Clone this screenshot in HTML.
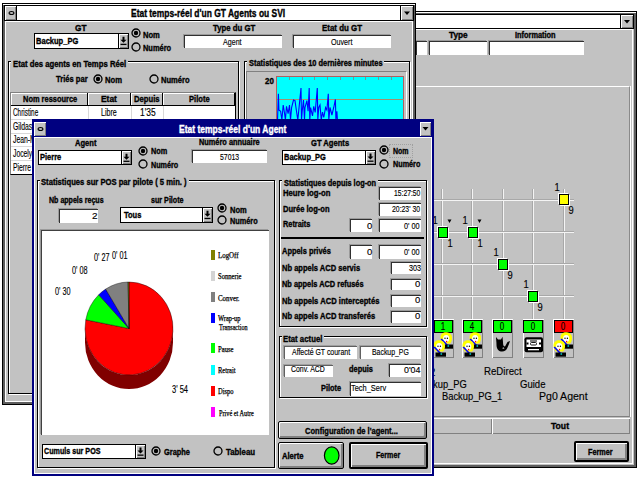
<!DOCTYPE html>
<html><head><meta charset="utf-8"><style>
html,body{margin:0;padding:0;background:#fff;}
body{width:640px;height:480px;position:relative;overflow:hidden;font-family:"Liberation Sans",sans-serif;}
body>div,body>svg{position:absolute;}
.t{white-space:nowrap;}
</style></head><body>
<div style="left:380px;top:11px;width:257px;height:457px;background:#5e5e5e;border:1px solid #000;box-sizing:border-box;box-shadow:inset 0 1px 0 #fff"></div>
<div style="left:383px;top:14px;width:251px;height:451px;background:#c2c2c2"></div>
<div style="left:383px;top:14px;width:251px;height:15px;background:#fff;border:1px solid #000;box-sizing:border-box"></div>
<div style="left:620px;top:14px;width:14px;height:15px;background:#c2c2c2;border:1px solid #000;box-sizing:border-box;box-shadow:inset 1px 1px 0 #fff,inset -1px -1px 0 #808080"></div>
<svg style="left:620px;top:14px" width="14" height="15"><path d="M4,6h6l-3,3.5z" fill="#000"/></svg>
<div style="left:384px;top:29px;width:249px;height:435px;box-shadow:inset 1px 1px 0 #fff,inset -1px -1px 0 #fff"></div>
<div class="t" style="left:448.67px;top:30.5px;font-size:9px;line-height:9px;font-weight:bold;color:#000;font-family:'Liberation Sans',sans-serif;-webkit-text-stroke:0.35px #000;transform:scaleX(0.9176);transform-origin:0 0">Type</div>
<div class="t" style="left:515.405px;top:30.5px;font-size:9px;line-height:9px;font-weight:bold;color:#000;font-family:'Liberation Sans',sans-serif;-webkit-text-stroke:0.35px #000;transform:scaleX(0.8201);transform-origin:0 0">Information</div>
<div style="left:416px;top:41px;width:11px;height:13.5px;background:#fff;border-top:1px solid #303030;border-left:1px solid #303030;box-sizing:border-box;box-shadow:-1px -1px 0 #9a9a9a"></div>
<div style="left:428.5px;top:41px;width:58.5px;height:13.5px;background:#fff;border-top:1px solid #303030;border-left:1px solid #303030;box-sizing:border-box;box-shadow:-1px -1px 0 #9a9a9a"></div>
<div style="left:489px;top:41px;width:95px;height:13.5px;background:#fff;border-top:1px solid #303030;border-left:1px solid #303030;box-sizing:border-box;box-shadow:-1px -1px 0 #9a9a9a"></div>
<div style="left:416px;top:86px;width:214px;height:331px;border-top:1px solid #fff;border-right:1px solid #8a8a8a;border-bottom:1px solid #808080;box-sizing:border-box;box-shadow:1px 0 0 #fff"></div>
<div style="left:441px;top:189px;width:1px;height:131px;background:#a8a8a8"></div>
<div style="left:442px;top:189px;width:1px;height:131px;background:#f4f4f4"></div>
<div style="left:471px;top:189px;width:1px;height:131px;background:#a8a8a8"></div>
<div style="left:472px;top:189px;width:1px;height:131px;background:#f4f4f4"></div>
<div style="left:502px;top:189px;width:1px;height:131px;background:#a8a8a8"></div>
<div style="left:503px;top:189px;width:1px;height:131px;background:#f4f4f4"></div>
<div style="left:532px;top:189px;width:1px;height:131px;background:#a8a8a8"></div>
<div style="left:533px;top:189px;width:1px;height:131px;background:#f4f4f4"></div>
<div style="left:563px;top:189px;width:1px;height:131px;background:#a8a8a8"></div>
<div style="left:564px;top:189px;width:1px;height:131px;background:#f4f4f4"></div>
<div style="left:416px;top:198.5px;width:158px;height:1px;background:#a8a8a8"></div>
<div style="left:416px;top:199.5px;width:158px;height:1px;background:#f4f4f4"></div>
<div style="left:416px;top:231px;width:158px;height:1px;background:#a8a8a8"></div>
<div style="left:416px;top:232px;width:158px;height:1px;background:#f4f4f4"></div>
<div style="left:416px;top:263px;width:158px;height:1px;background:#a8a8a8"></div>
<div style="left:416px;top:264px;width:158px;height:1px;background:#f4f4f4"></div>
<div style="left:416px;top:295px;width:158px;height:1px;background:#a8a8a8"></div>
<div style="left:416px;top:296px;width:158px;height:1px;background:#f4f4f4"></div>
<div style="left:559px;top:194px;width:10px;height:11px;background:#ffff00;border:1px solid #000;box-sizing:border-box;box-shadow:1px 1px 0 #fff,-1px -1px 0 #fff"></div>
<div style="left:437.5px;top:226.5px;width:10px;height:11px;background:#00ff00;border:1px solid #000;box-sizing:border-box;box-shadow:1px 1px 0 #fff,-1px -1px 0 #fff"></div>
<div style="left:467.5px;top:226.5px;width:10px;height:11px;background:#00ff00;border:1px solid #000;box-sizing:border-box;box-shadow:1px 1px 0 #fff,-1px -1px 0 #fff"></div>
<div style="left:498px;top:258.5px;width:10px;height:11px;background:#00ff00;border:1px solid #000;box-sizing:border-box;box-shadow:1px 1px 0 #fff,-1px -1px 0 #fff"></div>
<div style="left:528px;top:290.5px;width:10px;height:11px;background:#00ff00;border:1px solid #000;box-sizing:border-box;box-shadow:1px 1px 0 #fff,-1px -1px 0 #fff"></div>
<div class="t" style="left:256.5px;width:600px;text-align:center;top:182px;font-size:11px;line-height:11px;font-weight:normal;color:#000;font-family:'Liberation Sans',sans-serif;-webkit-text-stroke:0.15px #000;transform:scaleX(0.8500);transform-origin:300px 0">1</div>
<div class="t" style="left:271px;width:600px;text-align:center;top:205px;font-size:11px;line-height:11px;font-weight:normal;color:#000;font-family:'Liberation Sans',sans-serif;-webkit-text-stroke:0.15px #000;transform:scaleX(0.8500);transform-origin:300px 0">9</div>
<div class="t" style="left:135px;width:600px;text-align:center;top:214.5px;font-size:11px;line-height:11px;font-weight:normal;color:#000;font-family:'Liberation Sans',sans-serif;-webkit-text-stroke:0.15px #000;transform:scaleX(0.8500);transform-origin:300px 0">1</div>
<div class="t" style="left:149.5px;width:600px;text-align:center;top:237.5px;font-size:11px;line-height:11px;font-weight:normal;color:#000;font-family:'Liberation Sans',sans-serif;-webkit-text-stroke:0.15px #000;transform:scaleX(0.8500);transform-origin:300px 0">1</div>
<div class="t" style="left:165px;width:600px;text-align:center;top:214.5px;font-size:11px;line-height:11px;font-weight:normal;color:#000;font-family:'Liberation Sans',sans-serif;-webkit-text-stroke:0.15px #000;transform:scaleX(0.8500);transform-origin:300px 0">1</div>
<div class="t" style="left:179.5px;width:600px;text-align:center;top:237.5px;font-size:11px;line-height:11px;font-weight:normal;color:#000;font-family:'Liberation Sans',sans-serif;-webkit-text-stroke:0.15px #000;transform:scaleX(0.8500);transform-origin:300px 0">1</div>
<div class="t" style="left:195.5px;width:600px;text-align:center;top:246.5px;font-size:11px;line-height:11px;font-weight:normal;color:#000;font-family:'Liberation Sans',sans-serif;-webkit-text-stroke:0.15px #000;transform:scaleX(0.8500);transform-origin:300px 0">1</div>
<div class="t" style="left:210px;width:600px;text-align:center;top:269.5px;font-size:11px;line-height:11px;font-weight:normal;color:#000;font-family:'Liberation Sans',sans-serif;-webkit-text-stroke:0.15px #000;transform:scaleX(0.8500);transform-origin:300px 0">9</div>
<div class="t" style="left:225.5px;width:600px;text-align:center;top:278.5px;font-size:11px;line-height:11px;font-weight:normal;color:#000;font-family:'Liberation Sans',sans-serif;-webkit-text-stroke:0.15px #000;transform:scaleX(0.8500);transform-origin:300px 0">1</div>
<div class="t" style="left:240px;width:600px;text-align:center;top:301.5px;font-size:11px;line-height:11px;font-weight:normal;color:#000;font-family:'Liberation Sans',sans-serif;-webkit-text-stroke:0.15px #000;transform:scaleX(0.8500);transform-origin:300px 0">9</div>
<svg style="left:446.5px;top:219px" width="6" height="5"><path d="M0.5,0.5h4l-2,3.5z" fill="#000"/></svg>
<svg style="left:476.5px;top:219px" width="6" height="5"><path d="M0.5,0.5h4l-2,3.5z" fill="#000"/></svg>
<div style="left:433px;top:319px;width:21px;height:39px;background:#c2c2c2;box-shadow:inset 1px 1px 0 #fff,inset -1px -1px 0 #808080"></div>
<div style="left:433.5px;top:320px;width:19.5px;height:12.5px;background:#00ff00;border:1px solid #000;box-sizing:border-box"></div>
<div class="t" style="left:143.25px;width:600px;text-align:center;top:321.5px;font-size:10px;line-height:10px;font-weight:normal;color:#000;font-family:'Liberation Sans',sans-serif;-webkit-text-stroke:0.15px #000;transform:scaleX(0.8000);transform-origin:300px 0">1</div>
<svg style="left:439px;top:331.5px" width="16" height="17" viewBox="0 0 16 17"><path d="M1.8,7.5 C0.5,2 4,0 7.5,0.3 C11.5,0.6 13.5,3.5 13,7 C12.7,9 12,10.5 11,11.5 L4,11.5 C2.8,10.5 2,9 1.8,7.5z" fill="#ffff00"/><ellipse cx="7.2" cy="6.6" rx="3.1" ry="3.6" fill="#fff"/><circle cx="6" cy="6.3" r="0.7" fill="#000"/><circle cx="8.4" cy="6.3" r="0.7" fill="#000"/><circle cx="7.6" cy="9.6" r="0.8" fill="#ff0000"/><path d="M2.2,7 L8.5,13.5" stroke="#0000ff" stroke-width="1.6"/><rect x="3.5" y="12.5" width="10.5" height="4.2" fill="#000"/><rect x="8.5" y="13.2" width="1.6" height="1.6" fill="#00c0c0"/></svg>
<svg style="left:431.5px;top:340.3px" width="16" height="17" viewBox="0 0 16 17"><path d="M1.8,7.5 C0.5,2 4,0 7.5,0.3 C11.5,0.6 13.5,3.5 13,7 C12.7,9 12,10.5 11,11.5 L4,11.5 C2.8,10.5 2,9 1.8,7.5z" fill="#ffff00"/><ellipse cx="7.2" cy="6.6" rx="3.1" ry="3.6" fill="#fff"/><circle cx="6" cy="6.3" r="0.7" fill="#000"/><circle cx="8.4" cy="6.3" r="0.7" fill="#000"/><circle cx="7.6" cy="9.6" r="0.8" fill="#ff0000"/><path d="M2.2,7 L8.5,13.5" stroke="#0000ff" stroke-width="1.6"/><rect x="3.5" y="12.5" width="10.5" height="4.2" fill="#000"/><rect x="8.5" y="13.2" width="1.6" height="1.6" fill="#00c0c0"/></svg>
<div style="left:462px;top:319px;width:21px;height:39px;background:#c2c2c2;box-shadow:inset 1px 1px 0 #fff,inset -1px -1px 0 #808080"></div>
<div style="left:462.5px;top:320px;width:19.5px;height:12.5px;background:#00ff00;border:1px solid #000;box-sizing:border-box"></div>
<div class="t" style="left:172.25px;width:600px;text-align:center;top:321.5px;font-size:10px;line-height:10px;font-weight:normal;color:#000;font-family:'Liberation Sans',sans-serif;-webkit-text-stroke:0.15px #000;transform:scaleX(0.8000);transform-origin:300px 0">4</div>
<svg style="left:468px;top:331.5px" width="16" height="17" viewBox="0 0 16 17"><path d="M1.8,7.5 C0.5,2 4,0 7.5,0.3 C11.5,0.6 13.5,3.5 13,7 C12.7,9 12,10.5 11,11.5 L4,11.5 C2.8,10.5 2,9 1.8,7.5z" fill="#ffff00"/><ellipse cx="7.2" cy="6.6" rx="3.1" ry="3.6" fill="#fff"/><circle cx="6" cy="6.3" r="0.7" fill="#000"/><circle cx="8.4" cy="6.3" r="0.7" fill="#000"/><circle cx="7.6" cy="9.6" r="0.8" fill="#ff0000"/><path d="M2.2,7 L8.5,13.5" stroke="#0000ff" stroke-width="1.6"/><rect x="3.5" y="12.5" width="10.5" height="4.2" fill="#000"/><rect x="8.5" y="13.2" width="1.6" height="1.6" fill="#00c0c0"/></svg>
<svg style="left:460.5px;top:340.3px" width="16" height="17" viewBox="0 0 16 17"><path d="M1.8,7.5 C0.5,2 4,0 7.5,0.3 C11.5,0.6 13.5,3.5 13,7 C12.7,9 12,10.5 11,11.5 L4,11.5 C2.8,10.5 2,9 1.8,7.5z" fill="#ffff00"/><ellipse cx="7.2" cy="6.6" rx="3.1" ry="3.6" fill="#fff"/><circle cx="6" cy="6.3" r="0.7" fill="#000"/><circle cx="8.4" cy="6.3" r="0.7" fill="#000"/><circle cx="7.6" cy="9.6" r="0.8" fill="#ff0000"/><path d="M2.2,7 L8.5,13.5" stroke="#0000ff" stroke-width="1.6"/><rect x="3.5" y="12.5" width="10.5" height="4.2" fill="#000"/><rect x="8.5" y="13.2" width="1.6" height="1.6" fill="#00c0c0"/></svg>
<div style="left:492px;top:319px;width:21px;height:39px;background:#c2c2c2;box-shadow:inset 1px 1px 0 #fff,inset -1px -1px 0 #808080"></div>
<div style="left:492.5px;top:320px;width:19.5px;height:12.5px;background:#00ff00;border:1px solid #000;box-sizing:border-box"></div>
<div class="t" style="left:202.25px;width:600px;text-align:center;top:321.5px;font-size:10px;line-height:10px;font-weight:normal;color:#000;font-family:'Liberation Sans',sans-serif;-webkit-text-stroke:0.15px #000;transform:scaleX(0.8000);transform-origin:300px 0">0</div>
<svg style="left:495px;top:336px" width="16" height="17" viewBox="0 0 16 17"><path d="M1,1 L3,3.5 L6,3.5 L7.5,0.8 L8,6 C8,9 8.5,10.5 10,10.5 L12.5,6 L15,5 L14,8 L12.5,11.5 C11.5,14.5 9,16 6,15.5 C3,15 1.5,12 1.5,9 C1.5,6 1,3 1,1z" fill="#000"/><path d="M8,11 L9.5,12.5 L7.5,13z" fill="#c4c4c4"/></svg>
<div style="left:522.5px;top:319px;width:21px;height:39px;background:#c2c2c2;box-shadow:inset 1px 1px 0 #fff,inset -1px -1px 0 #808080"></div>
<div style="left:523px;top:320px;width:19.5px;height:12.5px;background:#00ff00;border:1px solid #000;box-sizing:border-box"></div>
<div class="t" style="left:232.75px;width:600px;text-align:center;top:321.5px;font-size:10px;line-height:10px;font-weight:normal;color:#000;font-family:'Liberation Sans',sans-serif;-webkit-text-stroke:0.15px #000;transform:scaleX(0.8000);transform-origin:300px 0">0</div>
<svg style="left:523.5px;top:336.5px" width="19" height="16" viewBox="0 0 19 16"><rect x="0.5" y="0.3" width="18.5" height="15" rx="2" fill="#000"/><rect x="2.5" y="2.5" width="14.5" height="7.5" fill="#fff"/><rect x="6" y="3.5" width="7" height="1" fill="#000"/><rect x="6.5" y="5.5" width="6" height="2.5" rx="1" fill="none" stroke="#000" stroke-width="0.9"/><rect x="2.5" y="5.5" width="2" height="2" fill="#000"/><rect x="15" y="5.5" width="2" height="2" fill="#000"/><rect x="4" y="12" width="11" height="1.3" fill="#fff"/></svg>
<div style="left:553px;top:319px;width:21px;height:39px;background:#c2c2c2;box-shadow:inset 1px 1px 0 #fff,inset -1px -1px 0 #808080"></div>
<div style="left:553.5px;top:320px;width:19.5px;height:12.5px;background:#ff0000;border:1px solid #000;box-sizing:border-box"></div>
<div class="t" style="left:263.25px;width:600px;text-align:center;top:321.5px;font-size:10px;line-height:10px;font-weight:normal;color:#000;font-family:'Liberation Sans',sans-serif;-webkit-text-stroke:0.15px #000;transform:scaleX(0.8000);transform-origin:300px 0">0</div>
<svg style="left:559px;top:331.5px" width="16" height="17" viewBox="0 0 16 17"><path d="M1.8,7.5 C0.5,2 4,0 7.5,0.3 C11.5,0.6 13.5,3.5 13,7 C12.7,9 12,10.5 11,11.5 L4,11.5 C2.8,10.5 2,9 1.8,7.5z" fill="#ffff00"/><ellipse cx="7.2" cy="6.6" rx="3.1" ry="3.6" fill="#fff"/><circle cx="6" cy="6.3" r="0.7" fill="#000"/><circle cx="8.4" cy="6.3" r="0.7" fill="#000"/><circle cx="7.6" cy="9.6" r="0.8" fill="#ff0000"/><path d="M2.2,7 L8.5,13.5" stroke="#0000ff" stroke-width="1.6"/><rect x="3.5" y="12.5" width="10.5" height="4.2" fill="#000"/><rect x="8.5" y="13.2" width="1.6" height="1.6" fill="#00c0c0"/></svg>
<svg style="left:551.5px;top:340.3px" width="16" height="17" viewBox="0 0 16 17"><path d="M1.8,7.5 C0.5,2 4,0 7.5,0.3 C11.5,0.6 13.5,3.5 13,7 C12.7,9 12,10.5 11,11.5 L4,11.5 C2.8,10.5 2,9 1.8,7.5z" fill="#ffff00"/><ellipse cx="7.2" cy="6.6" rx="3.1" ry="3.6" fill="#fff"/><circle cx="6" cy="6.3" r="0.7" fill="#000"/><circle cx="8.4" cy="6.3" r="0.7" fill="#000"/><circle cx="7.6" cy="9.6" r="0.8" fill="#ff0000"/><path d="M2.2,7 L8.5,13.5" stroke="#0000ff" stroke-width="1.6"/><rect x="3.5" y="12.5" width="10.5" height="4.2" fill="#000"/><rect x="8.5" y="13.2" width="1.6" height="1.6" fill="#00c0c0"/></svg>
<div class="t" style="left:484.214px;top:366.3px;font-size:10.5px;line-height:10.5px;font-weight:normal;color:#000;font-family:'Liberation Sans',sans-serif;-webkit-text-stroke:0.15px #000;transform:scaleX(0.9200);transform-origin:0 0">ReDirect</div>
<div class="t" style="left:429.622px;top:366.8px;font-size:10.5px;line-height:10.5px;font-weight:normal;color:#000;font-family:'Liberation Sans',sans-serif;-webkit-text-stroke:0.15px #000;transform:scaleX(0.9000);transform-origin:0 0">2</div>
<div class="t" style="left:417.127px;top:378.5px;font-size:10.5px;line-height:10.5px;font-weight:normal;color:#000;font-family:'Liberation Sans',sans-serif;-webkit-text-stroke:0.15px #000;transform:scaleX(0.8878);transform-origin:0 0">Backup_PG</div>
<div class="t" style="left:520.318px;top:378.5px;font-size:10.5px;line-height:10.5px;font-weight:normal;color:#000;font-family:'Liberation Sans',sans-serif;-webkit-text-stroke:0.15px #000;transform:scaleX(0.9089);transform-origin:0 0">Guide</div>
<div class="t" style="left:441.926px;top:391.3px;font-size:10.5px;line-height:10.5px;font-weight:normal;color:#000;font-family:'Liberation Sans',sans-serif;-webkit-text-stroke:0.15px #000;transform:scaleX(0.8898);transform-origin:0 0">Backup_PG_1</div>
<div class="t" style="left:539.178px;top:391.3px;font-size:10.5px;line-height:10.5px;font-weight:normal;color:#000;font-family:'Liberation Sans',sans-serif;-webkit-text-stroke:0.15px #000;transform:scaleX(1.0038);transform-origin:0 0">Pg0 Agent</div>
<div style="left:416px;top:417.5px;width:76px;height:16px;background:#c2c2c2;box-sizing:border-box;box-shadow:inset 1px 1px 0 #fff, inset -1px -1px 0 #808080;"></div>
<div style="left:492px;top:417.5px;width:137.5px;height:16px;background:#c2c2c2;box-sizing:border-box;box-shadow:inset 1px 1px 0 #fff, inset -1px -1px 0 #808080;"></div>
<div class="t" style="left:550.656px;top:421.7px;font-size:9px;line-height:9px;font-weight:bold;color:#000;font-family:'Liberation Sans',sans-serif;-webkit-text-stroke:0.35px #000;transform:scaleX(0.9558);transform-origin:0 0">Tout</div>
<div style="left:573.5px;top:441px;width:55px;height:20.5px;background:#c2c2c2;border:1px solid #000;box-sizing:border-box;border-radius:2px;box-shadow:inset 1px 1px 0 #fff, inset -1px -1px 0 #808080, inset -2px -2px 0 #808080;border-width:2px"></div>
<div class="t" style="left:588.31px;top:448px;font-size:9px;line-height:9px;font-weight:bold;color:#000;font-family:'Liberation Sans',sans-serif;-webkit-text-stroke:0.35px #000;transform:scaleX(0.8055);transform-origin:0 0">Fermer</div>
<div style="left:2px;top:3px;width:414px;height:402px;background:#5e5e5e;border:1px solid #000;box-sizing:border-box;box-shadow:inset 0 1px 0 #fff"></div>
<div style="left:5px;top:6px;width:408px;height:396px;background:#c2c2c2"></div>
<div style="left:4px;top:5px;width:410px;height:16px;background:#fff;border:1px solid #000;box-sizing:border-box"></div>
<div style="left:4px;top:5px;width:13px;height:16px;background:#c2c2c2;border:1px solid #000;box-sizing:border-box;box-shadow:inset 1px 1px 0 #fff,inset -1px -1px 0 #808080"></div>
<svg style="left:7.5px;top:10px" width="7" height="6"><ellipse cx="3.5" cy="3" rx="2.4" ry="1.5" fill="#bbb" stroke="#000" stroke-width="1.1"/></svg>
<div style="left:400px;top:5px;width:14px;height:16px;background:#c2c2c2;border:1px solid #000;box-sizing:border-box;box-shadow:inset 1px 1px 0 #fff,inset -1px -1px 0 #808080"></div>
<svg style="left:400px;top:5px" width="14" height="16"><path d="M4,6.5h6l-3,3.5z" fill="#000"/></svg>
<div class="t" style="left:131.162px;top:9.4px;font-size:10px;line-height:10px;font-weight:bold;color:#000;font-family:'Liberation Sans',sans-serif;-webkit-text-stroke:0.35px #000;transform:scaleX(0.8445);transform-origin:0 0">Etat temps-réel d'un GT Agents ou SVI</div>
<div style="left:5px;top:21px;width:408px;height:381px;box-shadow:inset 1px 1px 0 #fff, inset -1px -1px 0 #fff"></div>
<div class="t" style="left:75.1714px;top:23.5px;font-size:9px;line-height:9px;font-weight:bold;color:#000;font-family:'Liberation Sans',sans-serif;-webkit-text-stroke:0.35px #000;transform:scaleX(0.9128);transform-origin:0 0">GT</div>
<div style="left:34px;top:33px;width:95px;height:15.5px;background:#fff;border:1px solid #000;box-sizing:border-box"></div>
<div style="left:118px;top:34px;width:10px;height:13.5px;background:#c2c2c2;border-left:1px solid #000;box-sizing:border-box;box-shadow:inset 1px 1px 0 #fff, inset -1px -1px 0 #808080"></div>
<svg style="left:118px;top:33px;" width="11" height="15.5" viewBox="0 0 11 15.5"><path d="M4.5,3.75h2v3h2l-3,3l-3,-3h2z" fill="#000"/><rect x="2.5" y="10.75" width="6" height="1.3" fill="#000"/></svg>
<div class="t" style="left:36.2985px;top:36.5px;font-size:9px;line-height:9px;font-weight:bold;color:#000;font-family:'Liberation Sans',sans-serif;-webkit-text-stroke:0.35px #000;transform:scaleX(0.8374);transform-origin:0 0">Backup_PG</div>
<svg style="left:131.3px;top:28px;" width="10.0" height="10.0"><circle cx="5.0" cy="5.0" r="4.0" fill="none" stroke="#000" stroke-width="1.3"/><circle cx="5.0" cy="5.0" r="2.2" fill="#000"/></svg>
<div class="t" style="left:143.447px;top:30.5px;font-size:9px;line-height:9px;font-weight:bold;color:#000;font-family:'Liberation Sans',sans-serif;-webkit-text-stroke:0.35px #000;transform:scaleX(0.8429);transform-origin:0 0">Nom</div>
<svg style="left:131.3px;top:42px;" width="10.0" height="10.0"><circle cx="5.0" cy="5.0" r="4.0" fill="none" stroke="#000" stroke-width="1.3"/></svg>
<div class="t" style="left:143.453px;top:44.25px;font-size:9px;line-height:9px;font-weight:bold;color:#000;font-family:'Liberation Sans',sans-serif;-webkit-text-stroke:0.35px #000;transform:scaleX(0.8262);transform-origin:0 0">Numéro</div>
<div class="t" style="left:212.988px;top:23.5px;font-size:9px;line-height:9px;font-weight:bold;color:#000;font-family:'Liberation Sans',sans-serif;-webkit-text-stroke:0.35px #000;transform:scaleX(0.8668);transform-origin:0 0">Type du GT</div>
<div style="left:184px;top:34.7px;width:98px;height:13.6px;background:#fff;border-top:1px solid #303030;border-left:1px solid #303030;box-sizing:border-box;box-shadow:-1px -1px 0 #9a9a9a"></div>
<div class="t" style="left:222.716px;top:37.4px;font-size:9.5px;line-height:9.5px;font-weight:normal;color:#000;font-family:'Liberation Sans',sans-serif;-webkit-text-stroke:0.15px #000;transform:scaleX(0.7480);transform-origin:0 0">Agent</div>
<div class="t" style="left:322.283px;top:23.5px;font-size:9px;line-height:9px;font-weight:bold;color:#000;font-family:'Liberation Sans',sans-serif;-webkit-text-stroke:0.35px #000;transform:scaleX(0.8800);transform-origin:0 0">Etat du GT</div>
<div style="left:292.7px;top:34.7px;width:98.3px;height:13.6px;background:#fff;border-top:1px solid #303030;border-left:1px solid #303030;box-sizing:border-box;box-shadow:-1px -1px 0 #9a9a9a"></div>
<div class="t" style="left:330.715px;top:37.4px;font-size:9.5px;line-height:9.5px;font-weight:normal;color:#000;font-family:'Liberation Sans',sans-serif;-webkit-text-stroke:0.15px #000;transform:scaleX(0.7496);transform-origin:0 0">Ouvert</div>
<div style="left:7.5px;top:61px;width:231.5px;height:333px;border:1px solid #000;box-shadow:1px 1px 0 #fff, inset 1px 1px 0 #fff;box-sizing:border-box"></div>
<div style="left:11.4px;top:59px;width:116.6px;height:5px;background:#c2c2c2"></div>
<div class="t" style="left:13.0909px;top:59.8px;font-size:9px;line-height:9px;font-weight:bold;color:#000;font-family:'Liberation Sans',sans-serif;-webkit-text-stroke:0.35px #000;transform:scaleX(0.8586);transform-origin:0 0">Etat des agents en Temps Réel</div>
<div class="t" style="left:55.5967px;top:75.4px;font-size:9px;line-height:9px;font-weight:bold;color:#000;font-family:'Liberation Sans',sans-serif;-webkit-text-stroke:0.35px #000;transform:scaleX(0.8424);transform-origin:0 0">Triés par</div>
<svg style="left:93px;top:74.4px;" width="10.0" height="10.0"><circle cx="5.0" cy="5.0" r="4.0" fill="none" stroke="#000" stroke-width="1.3"/><circle cx="5.0" cy="5.0" r="2.2" fill="#000"/></svg>
<div class="t" style="left:104.694px;top:75.6px;font-size:9px;line-height:9px;font-weight:bold;color:#000;font-family:'Liberation Sans',sans-serif;-webkit-text-stroke:0.35px #000;transform:scaleX(0.8506);transform-origin:0 0">Nom</div>
<svg style="left:148.5px;top:74.4px;" width="10.0" height="10.0"><circle cx="5.0" cy="5.0" r="4.0" fill="none" stroke="#000" stroke-width="1.3"/></svg>
<div class="t" style="left:160.897px;top:75.8px;font-size:9px;line-height:9px;font-weight:bold;color:#000;font-family:'Liberation Sans',sans-serif;-webkit-text-stroke:0.35px #000;transform:scaleX(0.8412);transform-origin:0 0">Numéro</div>
<div style="left:10px;top:92px;width:226px;height:83px;background:#fff;border:1px solid #000;border-top-color:#808080;border-left-color:#808080;box-sizing:border-box"></div>
<div style="left:11px;top:93px;width:77px;height:12.5px;background:#c2c2c2;border-right:1px solid #000;border-bottom:1px solid #000;box-sizing:border-box;box-shadow:inset 1px 1px 0 #fff"></div>
<div class="t" style="left:22.7022px;top:95.2px;font-size:9px;line-height:9px;font-weight:bold;color:#000;font-family:'Liberation Sans',sans-serif;-webkit-text-stroke:0.35px #000;transform:scaleX(0.8271);transform-origin:0 0">Nom ressource</div>
<div style="left:88px;top:93px;width:43px;height:12.5px;background:#c2c2c2;border-right:1px solid #000;border-bottom:1px solid #000;box-sizing:border-box;box-shadow:inset 1px 1px 0 #fff"></div>
<div class="t" style="left:101.413px;top:95.2px;font-size:9px;line-height:9px;font-weight:bold;color:#000;font-family:'Liberation Sans',sans-serif;-webkit-text-stroke:0.35px #000;transform:scaleX(0.9366);transform-origin:0 0">Etat</div>
<div style="left:131px;top:93px;width:32px;height:12.5px;background:#c2c2c2;border-right:1px solid #000;border-bottom:1px solid #000;box-sizing:border-box;box-shadow:inset 1px 1px 0 #fff"></div>
<div class="t" style="left:134.394px;top:95.2px;font-size:9px;line-height:9px;font-weight:bold;color:#000;font-family:'Liberation Sans',sans-serif;-webkit-text-stroke:0.35px #000;transform:scaleX(0.8503);transform-origin:0 0">Depuis</div>
<div style="left:163px;top:93px;width:72px;height:12.5px;background:#c2c2c2;border-right:1px solid #000;border-bottom:1px solid #000;box-sizing:border-box;box-shadow:inset 1px 1px 0 #fff"></div>
<div class="t" style="left:189.397px;top:95.2px;font-size:9px;line-height:9px;font-weight:bold;color:#000;font-family:'Liberation Sans',sans-serif;-webkit-text-stroke:0.35px #000;transform:scaleX(0.8410);transform-origin:0 0">Pilote</div>
<div style="left:11px;top:119.2px;width:224px;height:1px;background:#d8d8d8"></div>
<div style="left:11px;top:132.7px;width:224px;height:1px;background:#d8d8d8"></div>
<div style="left:11px;top:146.2px;width:224px;height:1px;background:#d8d8d8"></div>
<div style="left:11px;top:160px;width:224px;height:1px;background:#d8d8d8"></div>
<div style="left:87.5px;top:105.5px;width:1px;height:69px;background:#d8d8d8"></div>
<div style="left:130.5px;top:105.5px;width:1px;height:69px;background:#d8d8d8"></div>
<div style="left:162.5px;top:105.5px;width:1px;height:69px;background:#d8d8d8"></div>
<div class="t" style="left:12.7444px;top:108.2px;font-size:10px;line-height:10px;font-weight:normal;color:#000;font-family:'Liberation Sans',sans-serif;-webkit-text-stroke:0.15px #000;transform:scaleX(0.6390);transform-origin:0 0">Christine</div>
<div class="t" style="left:12.728px;top:121.8px;font-size:10px;line-height:10px;font-weight:normal;color:#000;font-family:'Liberation Sans',sans-serif;-webkit-text-stroke:0.15px #000;transform:scaleX(0.6800);transform-origin:0 0">Gildas</div>
<div class="t" style="left:12.728px;top:135.4px;font-size:10px;line-height:10px;font-weight:normal;color:#000;font-family:'Liberation Sans',sans-serif;-webkit-text-stroke:0.15px #000;transform:scaleX(0.6800);transform-origin:0 0">Jean-Marc</div>
<div class="t" style="left:12.728px;top:149px;font-size:10px;line-height:10px;font-weight:normal;color:#000;font-family:'Liberation Sans',sans-serif;-webkit-text-stroke:0.15px #000;transform:scaleX(0.6800);transform-origin:0 0">Jocelyne</div>
<div class="t" style="left:12.728px;top:162.6px;font-size:10px;line-height:10px;font-weight:normal;color:#000;font-family:'Liberation Sans',sans-serif;-webkit-text-stroke:0.15px #000;transform:scaleX(0.6800);transform-origin:0 0">Pierre</div>
<div class="t" style="left:101.465px;top:107.7px;font-size:10px;line-height:10px;font-weight:normal;color:#000;font-family:'Liberation Sans',sans-serif;-webkit-text-stroke:0.15px #000;transform:scaleX(0.7115);transform-origin:0 0">Libre</div>
<div class="t" style="left:139.663px;top:107.7px;font-size:10px;line-height:10px;font-weight:normal;color:#000;font-family:'Liberation Sans',sans-serif;-webkit-text-stroke:0.15px #000;transform:scaleX(0.8431);transform-origin:0 0">1'35</div>
<div style="left:244px;top:61px;width:166px;height:333px;border:1px solid #000;box-shadow:1px 1px 0 #fff, inset 1px 1px 0 #fff;box-sizing:border-box"></div>
<div style="left:247.1px;top:59px;width:137px;height:5px;background:#c2c2c2"></div>
<div class="t" style="left:248.802px;top:59.3px;font-size:9px;line-height:9px;font-weight:bold;color:#000;font-family:'Liberation Sans',sans-serif;-webkit-text-stroke:0.35px #000;transform:scaleX(0.8270);transform-origin:0 0">Statistiques des 10 dernières minutes</div>
<div style="left:246px;top:71px;width:161px;height:321px;background:#c2c2c2;box-sizing:border-box;border-top:1px solid #808080;border-left:1px solid #808080;border-bottom:1px solid #fff;border-right:1px solid #fff;"></div>
<div class="t" style="left:265.482px;top:77.3px;font-size:9px;line-height:9px;font-weight:bold;color:#000;font-family:'Liberation Sans',sans-serif;-webkit-text-stroke:0.35px #000;transform:scaleX(0.8827);transform-origin:0 0">20</div>
<div style="left:275.5px;top:75.7px;width:128.5px;height:64.3px;background:#00ffff;border:1px solid #b06060;border-bottom:none;box-sizing:border-box"></div>
<div style="left:276.5px;top:99px;width:127px;height:1px;background:#a09070"></div>
<div style="left:289px;top:76.5px;width:1px;height:3px;background:#60a0a0"></div>
<div style="left:301.7px;top:76.5px;width:1px;height:3px;background:#60a0a0"></div>
<div style="left:314.4px;top:76.5px;width:1px;height:3px;background:#60a0a0"></div>
<div style="left:327.1px;top:76.5px;width:1px;height:3px;background:#60a0a0"></div>
<div style="left:339.8px;top:76.5px;width:1px;height:3px;background:#60a0a0"></div>
<div style="left:352.5px;top:76.5px;width:1px;height:3px;background:#60a0a0"></div>
<div style="left:365.2px;top:76.5px;width:1px;height:3px;background:#60a0a0"></div>
<div style="left:377.9px;top:76.5px;width:1px;height:3px;background:#60a0a0"></div>
<div style="left:390.6px;top:76.5px;width:1px;height:3px;background:#60a0a0"></div>
<svg style="left:276px;top:76px" width="128" height="50"><polyline points="1.50,45.00 2.40,17.75 2.90,34.00 4.60,35.25 5.90,44.00 7.20,29.00 8.50,37.00 9.40,44.00 10.50,30.25 12.10,37.75 13.50,29.00 14.50,44.00 15.60,31.50 17.50,24.00 19.00,24.60 20.50,35.25 21.80,44.00 25.00,12.00 25.50,44.00 26.20,35.00 27.50,24.00 28.50,44.00 29.00,31.50 30.90,24.60 32.10,35.25 33.20,12.00 33.80,44.00 34.60,31.50 36.50,40.00 37.75,30.25 39.20,36.50 41.30,12.00 41.80,44.00 42.75,31.50 44.00,29.00 45.25,44.00 46.50,36.00 47.75,41.50 49.60,31.50 50.90,34.00 52.30,17.75 52.80,44.00 54.00,31.50 55.90,39.00 57.75,31.50 59.40,23.40 59.90,44.00 60.90,35.25 61.50,45.00" fill="none" stroke="#0000ff" stroke-width="1.1"/></svg>
<div style="left:32px;top:119px;width:402px;height:357px;background:#c2c2c2;border:2px solid #000080;box-sizing:border-box"></div>
<div style="left:34px;top:121px;width:398px;height:15.5px;background:#000080"></div>
<div style="left:34px;top:122px;width:12px;height:14px;background:#c2c2c2;box-shadow:inset 1px 1px 0 #fff,inset -1px -1px 0 #808080"></div>
<svg style="left:37px;top:126px" width="7" height="6"><ellipse cx="3.5" cy="3" rx="2.4" ry="1.5" fill="#bbb" stroke="#000" stroke-width="1.1"/></svg>
<div style="left:420px;top:122px;width:11px;height:14px;background:#c2c2c2;box-shadow:inset 1px 1px 0 #fff,inset -1px -1px 0 #808080"></div>
<svg style="left:420px;top:121px" width="11" height="15"><path d="M2.5,6h6l-3,3.5z" fill="#000"/></svg>
<div class="t" style="left:178.96px;top:125.2px;font-size:10px;line-height:10px;font-weight:bold;color:#fff;font-family:'Liberation Sans',sans-serif;-webkit-text-stroke:0.35px #fff;transform:scaleX(0.8491);transform-origin:0 0">Etat temps-réel d'un Agent</div>
<div style="left:34px;top:136.5px;width:397.5px;height:337.5px;box-shadow:inset 1px 1px 0 #fff, inset -1px -1px 0 #fff"></div>
<div class="t" style="left:74.6978px;top:138.7px;font-size:9px;line-height:9px;font-weight:bold;color:#000;font-family:'Liberation Sans',sans-serif;-webkit-text-stroke:0.35px #000;transform:scaleX(0.8395);transform-origin:0 0">Agent</div>
<div style="left:38.3px;top:149.7px;width:93.3px;height:15.3px;background:#fff;border:1px solid #000;box-sizing:border-box"></div>
<div style="left:120.6px;top:150.7px;width:10px;height:13.3px;background:#c2c2c2;border-left:1px solid #000;box-sizing:border-box;box-shadow:inset 1px 1px 0 #fff, inset -1px -1px 0 #808080"></div>
<svg style="left:120.6px;top:149.7px;" width="11" height="15.300000000000011" viewBox="0 0 11 15.300000000000011"><path d="M4.5,3.6500000000000057h2v3h2l-3,3l-3,-3h2z" fill="#000"/><rect x="2.5" y="10.650000000000006" width="6" height="1.3" fill="#000"/></svg>
<div class="t" style="left:40.401px;top:153.2px;font-size:9px;line-height:9px;font-weight:bold;color:#000;font-family:'Liberation Sans',sans-serif;-webkit-text-stroke:0.35px #000;transform:scaleX(0.8307);transform-origin:0 0">Pierre</div>
<svg style="left:137.6px;top:145.9px;" width="10.0" height="10.0"><circle cx="5.0" cy="5.0" r="4.0" fill="none" stroke="#000" stroke-width="1.3"/><circle cx="5.0" cy="5.0" r="2.2" fill="#000"/></svg>
<div class="t" style="left:150.607px;top:147.3px;font-size:9px;line-height:9px;font-weight:bold;color:#000;font-family:'Liberation Sans',sans-serif;-webkit-text-stroke:0.35px #000;transform:scaleX(0.8143);transform-origin:0 0">Nom</div>
<svg style="left:137.6px;top:159.2px;" width="10.0" height="10.0"><circle cx="5.0" cy="5.0" r="4.0" fill="none" stroke="#000" stroke-width="1.3"/></svg>
<div class="t" style="left:150.611px;top:160.5px;font-size:9px;line-height:9px;font-weight:bold;color:#000;font-family:'Liberation Sans',sans-serif;-webkit-text-stroke:0.35px #000;transform:scaleX(0.8022);transform-origin:0 0">Numéro</div>
<div class="t" style="left:199.205px;top:138.3px;font-size:9px;line-height:9px;font-weight:bold;color:#000;font-family:'Liberation Sans',sans-serif;-webkit-text-stroke:0.35px #000;transform:scaleX(0.8186);transform-origin:0 0">Numéro annuaire</div>
<div style="left:191.8px;top:149.6px;width:75.5px;height:13.1px;background:#fff;border-top:1px solid #303030;border-left:1px solid #303030;box-sizing:border-box;box-shadow:-1px -1px 0 #9a9a9a"></div>
<div class="t" style="left:219.924px;top:151.6px;font-size:9.5px;line-height:9.5px;font-weight:normal;color:#000;font-family:'Liberation Sans',sans-serif;-webkit-text-stroke:0.15px #000;transform:scaleX(0.7250);transform-origin:0 0">57013</div>
<div class="t" style="left:310.696px;top:138.5px;font-size:9px;line-height:9px;font-weight:bold;color:#000;font-family:'Liberation Sans',sans-serif;-webkit-text-stroke:0.35px #000;transform:scaleX(0.8437);transform-origin:0 0">GT Agents</div>
<div style="left:281.5px;top:149.7px;width:94.5px;height:15.1px;background:#fff;border:1px solid #000;box-sizing:border-box"></div>
<div style="left:365px;top:150.7px;width:10px;height:13.1px;background:#c2c2c2;border-left:1px solid #000;box-sizing:border-box;box-shadow:inset 1px 1px 0 #fff, inset -1px -1px 0 #808080"></div>
<svg style="left:365px;top:149.7px;" width="11" height="15.100000000000023" viewBox="0 0 11 15.100000000000023"><path d="M4.5,3.5500000000000114h2v3h2l-3,3l-3,-3h2z" fill="#000"/><rect x="2.5" y="10.550000000000011" width="6" height="1.3" fill="#000"/></svg>
<div class="t" style="left:284.452px;top:152.8px;font-size:9px;line-height:9px;font-weight:bold;color:#000;font-family:'Liberation Sans',sans-serif;-webkit-text-stroke:0.35px #000;transform:scaleX(0.8284);transform-origin:0 0">Backup_PG</div>
<svg style="left:379px;top:145px;" width="10.0" height="10.0"><circle cx="5.0" cy="5.0" r="4.0" fill="none" stroke="#000" stroke-width="1.3"/><circle cx="5.0" cy="5.0" r="2.2" fill="#000"/></svg>
<div class="t" style="left:392.72px;top:147px;font-size:9px;line-height:9px;font-weight:bold;color:#000;font-family:'Liberation Sans',sans-serif;-webkit-text-stroke:0.35px #000;transform:scaleX(0.7780);transform-origin:0 0">Nom</div>
<div style="left:389.5px;top:144.5px;width:22px;height:12px;outline:1px dotted #a0a0a0"></div>
<svg style="left:379px;top:158.5px;" width="10.0" height="10.0"><circle cx="5.0" cy="5.0" r="4.0" fill="none" stroke="#000" stroke-width="1.3"/></svg>
<div class="t" style="left:392.711px;top:160.3px;font-size:9px;line-height:9px;font-weight:bold;color:#000;font-family:'Liberation Sans',sans-serif;-webkit-text-stroke:0.35px #000;transform:scaleX(0.8037);transform-origin:0 0">Numéro</div>
<div style="left:37px;top:179.7px;width:238px;height:288px;border:1px solid #000;box-shadow:1px 1px 0 #fff, inset 1px 1px 0 #fff;box-sizing:border-box"></div>
<div style="left:39.6px;top:177.7px;width:149px;height:5px;background:#c2c2c2"></div>
<div class="t" style="left:41.2944px;top:178.4px;font-size:9px;line-height:9px;font-weight:bold;color:#000;font-family:'Liberation Sans',sans-serif;-webkit-text-stroke:0.35px #000;transform:scaleX(0.8489);transform-origin:0 0">Statistiques sur POS par pilote ( 5 min. )</div>
<div class="t" style="left:48.7174px;top:195.6px;font-size:9px;line-height:9px;font-weight:bold;color:#000;font-family:'Liberation Sans',sans-serif;-webkit-text-stroke:0.35px #000;transform:scaleX(0.7849);transform-origin:0 0">Nb appels reçus</div>
<div style="left:59.4px;top:208.8px;width:39.1px;height:14.1px;background:#fff;border-top:1px solid #303030;border-left:1px solid #303030;box-sizing:border-box;box-shadow:-1px -1px 0 #9a9a9a"></div>
<div class="t" style="left:91.9051px;top:210.6px;font-size:9.5px;line-height:9.5px;font-weight:normal;color:#000;font-family:'Liberation Sans',sans-serif;-webkit-text-stroke:0.15px #000;transform:scaleX(1.0392);transform-origin:0 0">2</div>
<div class="t" style="left:150.714px;top:195.6px;font-size:9px;line-height:9px;font-weight:bold;color:#000;font-family:'Liberation Sans',sans-serif;-webkit-text-stroke:0.35px #000;transform:scaleX(0.7943);transform-origin:0 0">sur Pilote</div>
<div style="left:120.4px;top:207.25px;width:92.2px;height:15.65px;background:#fff;border:1px solid #000;box-sizing:border-box"></div>
<div style="left:201.6px;top:208.25px;width:10px;height:13.65px;background:#c2c2c2;border-left:1px solid #000;box-sizing:border-box;box-shadow:inset 1px 1px 0 #fff, inset -1px -1px 0 #808080"></div>
<svg style="left:201.6px;top:207.25px;" width="11" height="15.650000000000006" viewBox="0 0 11 15.650000000000006"><path d="M4.5,3.825000000000003h2v3h2l-3,3l-3,-3h2z" fill="#000"/><rect x="2.5" y="10.825000000000003" width="6" height="1.3" fill="#000"/></svg>
<div class="t" style="left:123.701px;top:210.6px;font-size:9px;line-height:9px;font-weight:bold;color:#000;font-family:'Liberation Sans',sans-serif;-webkit-text-stroke:0.35px #000;transform:scaleX(0.8305);transform-origin:0 0">Tous</div>
<svg style="left:217.2px;top:203px;" width="10.0" height="10.0"><circle cx="5.0" cy="5.0" r="4.0" fill="none" stroke="#000" stroke-width="1.3"/><circle cx="5.0" cy="5.0" r="2.2" fill="#000"/></svg>
<div class="t" style="left:229.599px;top:205.6px;font-size:9px;line-height:9px;font-weight:bold;color:#000;font-family:'Liberation Sans',sans-serif;-webkit-text-stroke:0.35px #000;transform:scaleX(0.8351);transform-origin:0 0">Nom</div>
<svg style="left:217.2px;top:215.3px;" width="10.0" height="10.0"><circle cx="5.0" cy="5.0" r="4.0" fill="none" stroke="#000" stroke-width="1.3"/></svg>
<div class="t" style="left:229.608px;top:216.8px;font-size:9px;line-height:9px;font-weight:bold;color:#000;font-family:'Liberation Sans',sans-serif;-webkit-text-stroke:0.35px #000;transform:scaleX(0.8112);transform-origin:0 0">Numéro</div>
<div style="left:41px;top:230px;width:227.5px;height:205px;background:#fff;border-top:1px solid #404040;border-left:1px solid #404040;box-shadow:-1px -1px 0 #9a9a9a;box-sizing:border-box"></div>
<svg style="left:0;top:0" width="640" height="480"><path d="M85,328.5 L85,342.5 A44,46.5 0 0 0 173,342.5 L173,328.5 A44,46.5 0 0 1 85,328.5z" fill="#800000"/><path d="M129,328.5 L129.00,282.00 A44,46.5 0 1 1 85.78,319.79 z" fill="#ff0000" stroke="#000" stroke-width="0.4"/><path d="M129,328.5 L85.78,319.79 A44,46.5 0 0 1 98.71,294.77 z" fill="#00ff00" stroke="#000" stroke-width="0.4"/><path d="M129,328.5 L98.71,294.77 A44,46.5 0 0 1 105.68,289.07 z" fill="#0000ff" stroke="#000" stroke-width="0.4"/><path d="M129,328.5 L105.68,289.07 A44,46.5 0 0 1 128.08,282.01 z" fill="#808080" stroke="#000" stroke-width="0.4"/><path d="M129,328.5 L128.08,282.01 A44,46.5 0 0 1 129.00,282.00 z" fill="#808000" stroke="#000" stroke-width="0.4"/></svg>
<div class="t" style="left:112.208px;top:249.5px;font-size:11px;line-height:11px;font-weight:normal;color:#000;font-family:'Liberation Sans',sans-serif;-webkit-text-stroke:0.15px #000;transform:scaleX(0.6629);transform-origin:0 0">0' 01</div>
<div class="t" style="left:93.5083px;top:252px;font-size:11px;line-height:11px;font-weight:normal;color:#000;font-family:'Liberation Sans',sans-serif;-webkit-text-stroke:0.15px #000;transform:scaleX(0.6629);transform-origin:0 0">0' 27</div>
<div class="t" style="left:71.7083px;top:265px;font-size:11px;line-height:11px;font-weight:normal;color:#000;font-family:'Liberation Sans',sans-serif;-webkit-text-stroke:0.15px #000;transform:scaleX(0.6629);transform-origin:0 0">0' 08</div>
<div class="t" style="left:54.7083px;top:286px;font-size:11px;line-height:11px;font-weight:normal;color:#000;font-family:'Liberation Sans',sans-serif;-webkit-text-stroke:0.15px #000;transform:scaleX(0.6629);transform-origin:0 0">0' 30</div>
<div class="t" style="left:172.301px;top:383.5px;font-size:11px;line-height:11px;font-weight:normal;color:#000;font-family:'Liberation Sans',sans-serif;-webkit-text-stroke:0.15px #000;transform:scaleX(0.6806);transform-origin:0 0">3' 54</div>
<div style="left:211.25px;top:249.5px;width:4px;height:10px;background:#808000"></div>
<div class="t" style="left:218.474px;top:252px;font-size:7.5px;line-height:7.5px;font-weight:normal;color:#000;font-family:'Liberation Serif',serif;-webkit-text-stroke:0.25px #000;transform:scaleX(0.9193);transform-origin:0 0">LogOff</div>
<div style="left:211.25px;top:270.8px;width:4px;height:10px;background:#d4d4d4"></div>
<div class="t" style="left:218.485px;top:273.3px;font-size:7.5px;line-height:7.5px;font-weight:normal;color:#000;font-family:'Liberation Serif',serif;-webkit-text-stroke:0.25px #000;transform:scaleX(0.8826);transform-origin:0 0">Sonnerie</div>
<div style="left:211.25px;top:292px;width:4px;height:10px;background:#808080"></div>
<div class="t" style="left:218.475px;top:294.5px;font-size:7.5px;line-height:7.5px;font-weight:normal;color:#000;font-family:'Liberation Serif',serif;-webkit-text-stroke:0.25px #000;transform:scaleX(0.9154);transform-origin:0 0">Conver.</div>
<div style="left:211.25px;top:312.5px;width:4px;height:10px;background:#0000ff"></div>
<div class="t" style="left:218.494px;top:315px;font-size:7.5px;line-height:7.5px;font-weight:normal;color:#000;font-family:'Liberation Serif',serif;-webkit-text-stroke:0.25px #000;transform:scaleX(0.8543);transform-origin:0 0">Wrap-up</div>
<div style="left:211.25px;top:343px;width:4px;height:10px;background:#00ff00"></div>
<div class="t" style="left:218.484px;top:345.5px;font-size:7.5px;line-height:7.5px;font-weight:normal;color:#000;font-family:'Liberation Serif',serif;-webkit-text-stroke:0.25px #000;transform:scaleX(0.8877);transform-origin:0 0">Pause</div>
<div style="left:211.25px;top:364.5px;width:4px;height:10px;background:#00ffff"></div>
<div class="t" style="left:218.493px;top:367px;font-size:7.5px;line-height:7.5px;font-weight:normal;color:#000;font-family:'Liberation Serif',serif;-webkit-text-stroke:0.25px #000;transform:scaleX(0.8582);transform-origin:0 0">Retrait</div>
<div style="left:211.25px;top:385.5px;width:4px;height:10px;background:#ff0000"></div>
<div class="t" style="left:218.49px;top:388px;font-size:7.5px;line-height:7.5px;font-weight:normal;color:#000;font-family:'Liberation Serif',serif;-webkit-text-stroke:0.25px #000;transform:scaleX(0.8661);transform-origin:0 0">Dispo</div>
<div style="left:211.25px;top:407px;width:4px;height:10px;background:#ff00ff"></div>
<div class="t" style="left:218.5px;top:409.5px;font-size:7.5px;line-height:7.5px;font-weight:normal;color:#000;font-family:'Liberation Serif',serif;-webkit-text-stroke:0.25px #000;transform:scaleX(0.8342);transform-origin:0 0">Privé et Autre</div>
<div class="t" style="left:218.507px;top:323.8px;font-size:7.5px;line-height:7.5px;font-weight:normal;color:#000;font-family:'Liberation Serif',serif;-webkit-text-stroke:0.25px #000;transform:scaleX(0.8107);transform-origin:0 0">Transaction</div>
<div style="left:41.6px;top:443.5px;width:104.7px;height:15px;background:#fff;border:1px solid #000;box-sizing:border-box"></div>
<div style="left:135.3px;top:444.5px;width:10px;height:13px;background:#c2c2c2;border-left:1px solid #000;box-sizing:border-box;box-shadow:inset 1px 1px 0 #fff, inset -1px -1px 0 #808080"></div>
<svg style="left:135.3px;top:443.5px;" width="11" height="15.0" viewBox="0 0 11 15.0"><path d="M4.5,3.5h2v3h2l-3,3l-3,-3h2z" fill="#000"/><rect x="2.5" y="10.5" width="6" height="1.3" fill="#000"/></svg>
<div class="t" style="left:43.6137px;top:446.8px;font-size:9px;line-height:9px;font-weight:bold;color:#000;font-family:'Liberation Sans',sans-serif;-webkit-text-stroke:0.35px #000;transform:scaleX(0.7952);transform-origin:0 0">Cumuls sur POS</div>
<svg style="left:151.2px;top:446.2px;" width="10.0" height="10.0"><circle cx="5.0" cy="5.0" r="4.0" fill="none" stroke="#000" stroke-width="1.3"/><circle cx="5.0" cy="5.0" r="2.2" fill="#000"/></svg>
<div class="t" style="left:164.003px;top:448.3px;font-size:9px;line-height:9px;font-weight:bold;color:#000;font-family:'Liberation Sans',sans-serif;-webkit-text-stroke:0.35px #000;transform:scaleX(0.8250);transform-origin:0 0">Graphe</div>
<svg style="left:212.5px;top:446.2px;" width="10.0" height="10.0"><circle cx="5.0" cy="5.0" r="4.0" fill="none" stroke="#000" stroke-width="1.3"/></svg>
<div class="t" style="left:225.987px;top:448.3px;font-size:9px;line-height:9px;font-weight:bold;color:#000;font-family:'Liberation Sans',sans-serif;-webkit-text-stroke:0.35px #000;transform:scaleX(0.8707);transform-origin:0 0">Tableau</div>
<div style="left:279px;top:179.7px;width:148.25px;height:147.3px;border:1px solid #000;box-shadow:1px 1px 0 #fff, inset 1px 1px 0 #fff;box-sizing:border-box"></div>
<div style="left:282px;top:177.7px;width:95.5px;height:5px;background:#c2c2c2"></div>
<div class="t" style="left:283.705px;top:178.5px;font-size:9px;line-height:9px;font-weight:bold;color:#000;font-family:'Liberation Sans',sans-serif;-webkit-text-stroke:0.35px #000;transform:scaleX(0.8186);transform-origin:0 0">Statistiques depuis log-on</div>
<div class="t" style="left:282.693px;top:189px;font-size:9px;line-height:9px;font-weight:bold;color:#000;font-family:'Liberation Sans',sans-serif;-webkit-text-stroke:0.35px #000;transform:scaleX(0.8535);transform-origin:0 0">Heure log-on</div>
<div class="t" style="left:282.698px;top:204.7px;font-size:9px;line-height:9px;font-weight:bold;color:#000;font-family:'Liberation Sans',sans-serif;-webkit-text-stroke:0.35px #000;transform:scaleX(0.8398);transform-origin:0 0">Durée log-on</div>
<div class="t" style="left:282.706px;top:220.3px;font-size:9px;line-height:9px;font-weight:bold;color:#000;font-family:'Liberation Sans',sans-serif;-webkit-text-stroke:0.35px #000;transform:scaleX(0.8158);transform-origin:0 0">Retraits</div>
<div style="left:378.5px;top:186.5px;width:42.5px;height:13.25px;background:#fff;border-top:1px solid #303030;border-left:1px solid #303030;box-sizing:border-box;box-shadow:-1px -1px 0 #9a9a9a"></div>
<div class="t" style="left:393.73px;top:188.4px;font-size:9.5px;line-height:9.5px;font-weight:normal;color:#000;font-family:'Liberation Sans',sans-serif;-webkit-text-stroke:0.15px #000;transform:scaleX(0.7110);transform-origin:0 0">15:27:50</div>
<div style="left:378.5px;top:203px;width:42.5px;height:12.5px;background:#fff;border-top:1px solid #303030;border-left:1px solid #303030;box-sizing:border-box;box-shadow:-1px -1px 0 #9a9a9a"></div>
<div class="t" style="left:391.975px;top:204.4px;font-size:9.5px;line-height:9.5px;font-weight:normal;color:#000;font-family:'Liberation Sans',sans-serif;-webkit-text-stroke:0.15px #000;transform:scaleX(0.7231);transform-origin:0 0">20:23' 30</div>
<div style="left:349.75px;top:219px;width:22.5px;height:13.25px;background:#fff;border-top:1px solid #303030;border-left:1px solid #303030;box-sizing:border-box;box-shadow:-1px -1px 0 #9a9a9a"></div>
<div class="t" style="left:367.122px;top:220.9px;font-size:9.5px;line-height:9.5px;font-weight:normal;color:#000;font-family:'Liberation Sans',sans-serif;-webkit-text-stroke:0.15px #000;transform:scaleX(0.9949);transform-origin:0 0">0</div>
<div style="left:378.5px;top:219px;width:42.5px;height:13.25px;background:#fff;border-top:1px solid #303030;border-left:1px solid #303030;box-sizing:border-box;box-shadow:-1px -1px 0 #9a9a9a"></div>
<div class="t" style="left:404.458px;top:220.9px;font-size:9.5px;line-height:9.5px;font-weight:normal;color:#000;font-family:'Liberation Sans',sans-serif;-webkit-text-stroke:0.15px #000;transform:scaleX(0.7676);transform-origin:0 0">0' 00</div>
<div style="left:281px;top:237px;width:142.5px;height:2px;background:#000"></div>
<div class="t" style="left:281.952px;top:247px;font-size:9px;line-height:9px;font-weight:bold;color:#000;font-family:'Liberation Sans',sans-serif;-webkit-text-stroke:0.35px #000;transform:scaleX(0.8276);transform-origin:0 0">Appels privés</div>
<div style="left:350.25px;top:245.25px;width:22px;height:13.25px;background:#fff;border-top:1px solid #303030;border-left:1px solid #303030;box-sizing:border-box;box-shadow:-1px -1px 0 #9a9a9a"></div>
<div class="t" style="left:367.122px;top:247.4px;font-size:9.5px;line-height:9.5px;font-weight:normal;color:#000;font-family:'Liberation Sans',sans-serif;-webkit-text-stroke:0.15px #000;transform:scaleX(0.9949);transform-origin:0 0">0</div>
<div style="left:378.5px;top:245.25px;width:42.5px;height:13.25px;background:#fff;border-top:1px solid #303030;border-left:1px solid #303030;box-sizing:border-box;box-shadow:-1px -1px 0 #9a9a9a"></div>
<div class="t" style="left:404.458px;top:247.4px;font-size:9.5px;line-height:9.5px;font-weight:normal;color:#000;font-family:'Liberation Sans',sans-serif;-webkit-text-stroke:0.15px #000;transform:scaleX(0.7676);transform-origin:0 0">0' 00</div>
<div class="t" style="left:281.948px;top:264.05px;font-size:9px;line-height:9px;font-weight:bold;color:#000;font-family:'Liberation Sans',sans-serif;-webkit-text-stroke:0.35px #000;transform:scaleX(0.8381);transform-origin:0 0">Nb appels ACD servis</div>
<div style="left:391px;top:262px;width:30px;height:12px;background:#fff;border-top:1px solid #303030;border-left:1px solid #303030;box-sizing:border-box;box-shadow:-1px -1px 0 #9a9a9a"></div>
<div class="t" style="left:408.71px;top:262.65px;font-size:9.5px;line-height:9.5px;font-weight:normal;color:#000;font-family:'Liberation Sans',sans-serif;-webkit-text-stroke:0.15px #000;transform:scaleX(0.7622);transform-origin:0 0">303</div>
<div class="t" style="left:281.954px;top:280.3px;font-size:9px;line-height:9px;font-weight:bold;color:#000;font-family:'Liberation Sans',sans-serif;-webkit-text-stroke:0.35px #000;transform:scaleX(0.8226);transform-origin:0 0">Nb appels ACD refusés</div>
<div style="left:391px;top:278.5px;width:30px;height:11.75px;background:#fff;border-top:1px solid #303030;border-left:1px solid #303030;box-sizing:border-box;box-shadow:-1px -1px 0 #9a9a9a"></div>
<div class="t" style="left:415.122px;top:278.9px;font-size:9.5px;line-height:9.5px;font-weight:normal;color:#000;font-family:'Liberation Sans',sans-serif;-webkit-text-stroke:0.15px #000;transform:scaleX(0.9949);transform-origin:0 0">0</div>
<div class="t" style="left:281.946px;top:296.55px;font-size:9px;line-height:9px;font-weight:bold;color:#000;font-family:'Liberation Sans',sans-serif;-webkit-text-stroke:0.35px #000;transform:scaleX(0.8452);transform-origin:0 0">Nb appels ACD interceptés</div>
<div style="left:391px;top:294.75px;width:30px;height:11.75px;background:#fff;border-top:1px solid #303030;border-left:1px solid #303030;box-sizing:border-box;box-shadow:-1px -1px 0 #9a9a9a"></div>
<div class="t" style="left:415.122px;top:295.15px;font-size:9.5px;line-height:9.5px;font-weight:normal;color:#000;font-family:'Liberation Sans',sans-serif;-webkit-text-stroke:0.15px #000;transform:scaleX(0.9949);transform-origin:0 0">0</div>
<div class="t" style="left:281.947px;top:312.3px;font-size:9px;line-height:9px;font-weight:bold;color:#000;font-family:'Liberation Sans',sans-serif;-webkit-text-stroke:0.35px #000;transform:scaleX(0.8411);transform-origin:0 0">Nb appels ACD transferés</div>
<div style="left:391px;top:311px;width:30px;height:11.75px;background:#fff;border-top:1px solid #303030;border-left:1px solid #303030;box-sizing:border-box;box-shadow:-1px -1px 0 #9a9a9a"></div>
<div class="t" style="left:415.122px;top:310.9px;font-size:9.5px;line-height:9.5px;font-weight:normal;color:#000;font-family:'Liberation Sans',sans-serif;-webkit-text-stroke:0.15px #000;transform:scaleX(0.9949);transform-origin:0 0">0</div>
<div style="left:279px;top:335.75px;width:148.25px;height:61.75px;border:1px solid #000;box-shadow:1px 1px 0 #fff, inset 1px 1px 0 #fff;box-sizing:border-box"></div>
<div style="left:281.5px;top:333.75px;width:42.75px;height:5px;background:#c2c2c2"></div>
<div class="t" style="left:283.189px;top:334.5px;font-size:9px;line-height:9px;font-weight:bold;color:#000;font-family:'Liberation Sans',sans-serif;-webkit-text-stroke:0.35px #000;transform:scaleX(0.8651);transform-origin:0 0">Etat actuel</div>
<div style="left:283.75px;top:346.4px;width:73.25px;height:13.1px;background:#fff;box-sizing:border-box;border-top:1px solid #606060;border-left:1px solid #606060;box-shadow:-1px -1px 0 #a0a0a0"></div>
<div class="t" style="left:291.622px;top:347.6px;font-size:9px;line-height:9px;font-weight:normal;color:#000;font-family:'Liberation Sans',sans-serif;-webkit-text-stroke:0.15px #000;transform:scaleX(0.7720);transform-origin:0 0">Affecté GT courant</div>
<div style="left:359.75px;top:346.4px;width:61.25px;height:13.1px;background:#fff;box-sizing:border-box;border-top:1px solid #606060;border-left:1px solid #606060;box-shadow:-1px -1px 0 #a0a0a0"></div>
<div class="t" style="left:371.974px;top:347.6px;font-size:9px;line-height:9px;font-weight:normal;color:#000;font-family:'Liberation Sans',sans-serif;-webkit-text-stroke:0.15px #000;transform:scaleX(0.7663);transform-origin:0 0">Backup_PG</div>
<div style="left:283.75px;top:364.5px;width:49.25px;height:12.5px;background:#fff;box-sizing:border-box;border-top:1px solid #606060;border-left:1px solid #606060;box-shadow:-1px -1px 0 #a0a0a0"></div>
<div class="t" style="left:291.222px;top:365.3px;font-size:9px;line-height:9px;font-weight:normal;color:#000;font-family:'Liberation Sans',sans-serif;-webkit-text-stroke:0.15px #000;transform:scaleX(0.7710);transform-origin:0 0">Conv. ACD</div>
<div class="t" style="left:348.704px;top:364.5px;font-size:9px;line-height:9px;font-weight:bold;color:#000;font-family:'Liberation Sans',sans-serif;-webkit-text-stroke:0.35px #000;transform:scaleX(0.8221);transform-origin:0 0">depuis</div>
<div style="left:388.5px;top:364px;width:32.5px;height:13px;background:#fff;border-top:1px solid #303030;border-left:1px solid #303030;box-sizing:border-box;box-shadow:-1px -1px 0 #9a9a9a"></div>
<div class="t" style="left:404.396px;top:365.4px;font-size:9.5px;line-height:9.5px;font-weight:normal;color:#000;font-family:'Liberation Sans',sans-serif;-webkit-text-stroke:0.15px #000;transform:scaleX(0.9318);transform-origin:0 0">0'04</div>
<div class="t" style="left:320.705px;top:383.75px;font-size:9px;line-height:9px;font-weight:bold;color:#000;font-family:'Liberation Sans',sans-serif;-webkit-text-stroke:0.35px #000;transform:scaleX(0.8199);transform-origin:0 0">Pilote</div>
<div style="left:349.75px;top:381.5px;width:71.25px;height:14px;background:#fff;border-top:1px solid #303030;border-left:1px solid #303030;box-sizing:border-box;box-shadow:-1px -1px 0 #9a9a9a"></div>
<div class="t" style="left:351.203px;top:383.15px;font-size:9.5px;line-height:9.5px;font-weight:normal;color:#000;font-family:'Liberation Sans',sans-serif;-webkit-text-stroke:0.15px #000;transform:scaleX(0.7819);transform-origin:0 0">Tech_Serv</div>
<div style="left:277.6px;top:421.4px;width:149.5px;height:17.2px;background:#c2c2c2;border:1px solid #000;box-sizing:border-box;border-radius:2px;box-shadow:inset 1px 1px 0 #fff, inset -1px -1px 0 #808080, inset -2px -2px 0 #808080;"></div>
<div class="t" style="left:304.998px;top:426.5px;font-size:9px;line-height:9px;font-weight:bold;color:#000;font-family:'Liberation Sans',sans-serif;-webkit-text-stroke:0.35px #000;transform:scaleX(0.8398);transform-origin:0 0">Configuration de l'agent...</div>
<div style="left:277.6px;top:442px;width:66.7px;height:26.8px;background:#c2c2c2;border:1px solid #000;box-sizing:border-box;border-radius:2px;box-shadow:inset 1px 1px 0 #fff, inset -1px -1px 0 #808080, inset -2px -2px 0 #808080;"></div>
<div class="t" style="left:281.945px;top:452.1px;font-size:9px;line-height:9px;font-weight:bold;color:#000;font-family:'Liberation Sans',sans-serif;-webkit-text-stroke:0.35px #000;transform:scaleX(0.8471);transform-origin:0 0">Alerte</div>
<svg style="left:322px;top:445px" width="20" height="21"><ellipse cx="9.7" cy="10.5" rx="7.3" ry="8.6" fill="#00ff00" stroke="#000" stroke-width="1.2"/></svg>
<div style="left:349.4px;top:442px;width:78.5px;height:26.8px;background:#c2c2c2;border:1px solid #000;box-sizing:border-box;border-radius:2px;box-shadow:inset 1px 1px 0 #fff, inset -1px -1px 0 #808080, inset -2px -2px 0 #808080;border-width:2px"></div>
<div class="t" style="left:376.315px;top:451px;font-size:9px;line-height:9px;font-weight:bold;color:#000;font-family:'Liberation Sans',sans-serif;-webkit-text-stroke:0.35px #000;transform:scaleX(0.7921);transform-origin:0 0">Fermer</div>
</body></html>
